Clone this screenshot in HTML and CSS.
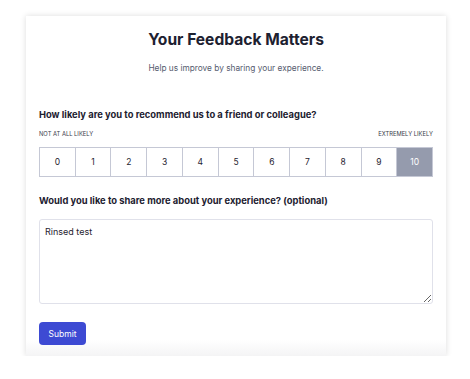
FILE: index.html
```html
<!DOCTYPE html>
<html>
<head>
  <title>Feedback</title>
  <link rel="stylesheet" href="styles.css">
</head>
<body>
  <div class="card">
    <h1 class="title">Your Feedback Matters</h1>
    <p class="subtitle">Help us improve by sharing your experience.</p>

    <h2 class="question q-first">How likely are you to recommend us to a friend or colleague?</h2>
    <div class="scale-labels">
      <span>Not at all likely</span>
      <span>Extremely likely</span>
    </div>
    <div class="scale">
      <button class="score">0</button>
      <button class="score">1</button>
      <button class="score">2</button>
      <button class="score">3</button>
      <button class="score">4</button>
      <button class="score">5</button>
      <button class="score">6</button>
      <button class="score">7</button>
      <button class="score">8</button>
      <button class="score">9</button>
      <button class="score selected">10</button>
    </div>

    <h2 class="question q-second">Would you like to share more about your experience? (optional)</h2>
    <textarea class="comments">Rinsed test</textarea>

    <button class="submit">Submit</button>
  </div>
</body>
</html>
```

FILE: styles.css
```css
body {
  font-family: Inter, "Noto Sans", sans-serif;
  margin: 0;
  padding-top: 16px;
  background-color: #ffffff;
  color: #1f2330;
}
.card {
  width: 394px;
  margin-left: 26px;
  padding: 13px 13px 11px 13px;
  background: linear-gradient(to bottom, #ffffff 0, #ffffff 324px, #f4f4f5 100%);
  box-shadow: 0 0 6px rgba(0,0,0,0.14);
}
.title {
  margin: 0;
  font-size: 15.6px;
  line-height: 21px;
  font-weight: 700;
  text-align: center;
  color: #1d2130;
}
.subtitle {
  margin: 12px 0 0 0;
  font-size: 8.3px;
  line-height: 12px;
  text-align: center;
  color: #555b6e;
}
.question {
  margin: 0;
  font-size: 9.4px;
  line-height: 14px;
  font-weight: 700;
  color: #1d2130;
}
.q-first {
  margin-top: 34px;
}
.q-second {
  margin-top: 17px;
}
.scale-labels {
  display: flex;
  justify-content: space-between;
  margin-top: 8px;
  font-size: 5.8px;
  line-height: 8px;
  text-transform: uppercase;
  color: #3a3e4a;
}
.scale {
  display: flex;
  margin-top: 9px;
  border: 1px solid #c5c8d5;
  height: 28px;
}
.score {
  flex: 1;
  border: none;
  border-right: 1px solid #c5c8d5;
  background-color: #ffffff;
  font-family: Inter, "Noto Sans", sans-serif;
  font-size: 8.5px;
  color: #1f2330;
  padding: 0;
  cursor: pointer;
}
.score:last-child {
  border-right: none;
}
.score.selected {
  background-color: #959bad;
  color: #ffffff;
}
.comments {
  display: block;
  box-sizing: border-box;
  width: 100%;
  height: 85px;
  margin-top: 11px;
  padding: 6px 5px;
  border: 1px solid #e0e1ea;
  border-radius: 3px;
  font-family: Inter, "Noto Sans", sans-serif;
  font-size: 9px;
  line-height: 12px;
  color: #1f2330;
  background-color: #ffffff;
}
.submit {
  display: block;
  margin-top: 18px;
  width: 47px;
  height: 23px;
  padding: 0;
  border: none;
  border-radius: 4px;
  background-color: #3d4ad3;
  color: #ffffff;
  font-family: Inter, "Noto Sans", sans-serif;
  font-size: 8.5px;
  cursor: pointer;
}
```
